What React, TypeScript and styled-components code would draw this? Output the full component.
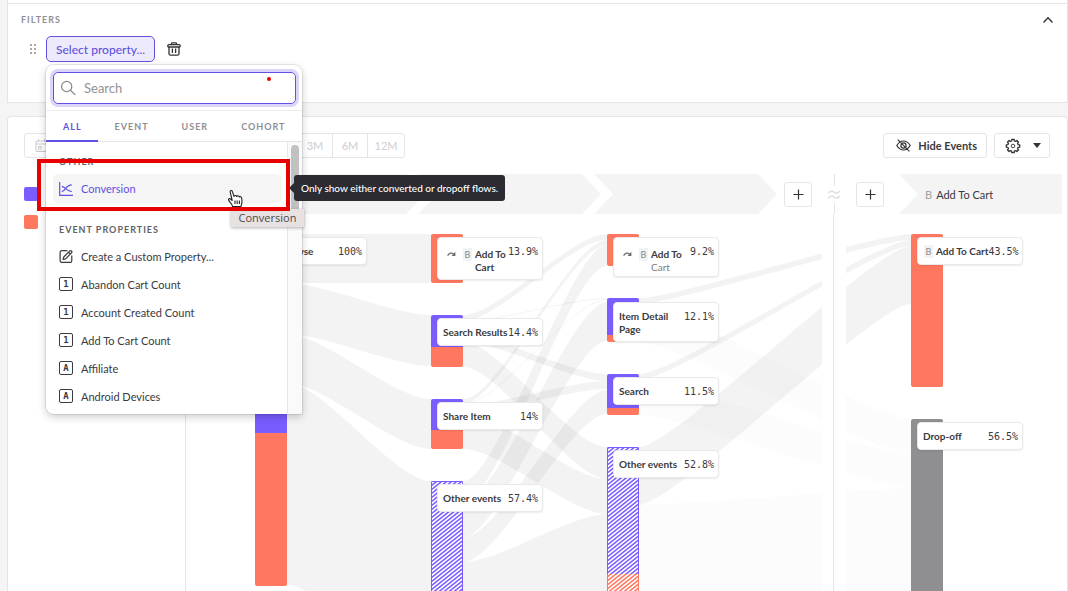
import React from "react";
import styled, { createGlobalStyle, css } from "styled-components";

const color = {
  accent: "#5f52e0",
  purple: "#7b5cff",
  coral: "#ff775e",
  grey: "#8f8f91",
  text: "#3a3a40",
  muted: "#8f8f93",
  faint: "#cdcdcf",
  line: "#e5e5e6",
};

const GlobalStyle = createGlobalStyle`
  * { box-sizing: border-box; }
  body {
    margin: 0;
    background: #f5f5f5;
    color: ${color.text};
    font-family: Lato, "Liberation Sans", sans-serif;
    font-size: 11px;
  }
  button, input { font: inherit; color: inherit; }
  button { cursor: pointer; }
`;

const Page = styled.main`
  position: relative;
  display: flex;
  flex-direction: column;
  gap: 13px;
  height: 100vh;
  padding-left: 7px;
  overflow: hidden;
`;

const QueryPanel = styled.section`
  border: 1px solid ${color.line};
  border-top: 0;
  background: #fff;
  padding-top: 3px;
`;

const FilterSection = styled.div`
  border-top: 1px solid ${color.line};
  padding: 9px 13px 40px;
`;

const SectionHeader = styled.header`
  display: flex;
  align-items: center;
  justify-content: space-between;
  height: 14px;
`;

const Caption = styled.h2<{ $dark?: boolean }>`
  margin: 0;
  font-size: 9px;
  line-height: 14px;
  font-weight: 700;
  letter-spacing: 1px;
  text-transform: uppercase;
  color: ${(p) => (p.$dark ? "#626266" : color.muted)};
`;

const IconButton = styled.button`
  display: flex;
  align-items: center;
  justify-content: center;
  padding: 0;
  border: 0;
  background: none;
`;

const FilterRow = styled.div`
  display: flex;
  align-items: center;
  gap: 9px;
  margin-top: 9px;
  padding-left: 9px;
`;

const PropertyPicker = styled.div`
  position: relative;
  margin-right: 3px;
`;

const PropertyButton = styled.button`
  display: block;
  height: 26px;
  padding: 0 9px;
  border: 1px solid ${color.accent};
  border-radius: 5px;
  background: #edebfb;
  color: ${color.accent};
  font-size: 12px;
  font-weight: 500;
`;

const Popover = styled.div`
  position: absolute;
  z-index: 5;
  top: 29px;
  left: 0;
  width: 256px;
  border-radius: 8px 8px 0 8px;
  background: #fff;
  box-shadow: 0 0 0 1px rgba(0, 0, 0, 0.08), 0 3px 8px rgba(0, 0, 0, 0.2);
`;

const SearchBox = styled.label`
  display: flex;
  align-items: center;
  gap: 8px;
  height: 32px;
  margin: 7px 6px 6px 7px;
  padding: 0 6px;
  border: 1px solid ${color.accent};
  border-radius: 5px;
  box-shadow: 0 0 0 3px #d9d6fa;
`;

const SearchInput = styled.input`
  flex: 1;
  min-width: 0;
  padding: 0;
  border: 0;
  outline: 0;
  background: none;
  font-size: 13px;
  &::placeholder { color: #929296; opacity: 1; }
`;

const Tabs = styled.div`
  display: flex;
  height: 32px;
  border-top: 1px solid #ededee;
  border-bottom: 1px solid ${color.line};
`;

const Tab = styled.button<{ $active?: boolean }>`
  height: 31px;
  padding: 2px 16px 0 17px;
  border: 0;
  border-bottom: 2px solid ${(p) => (p.$active ? color.accent : "transparent")};
  background: none;
  color: ${(p) => (p.$active ? color.accent : color.muted)};
  font-size: 9px;
  font-weight: 700;
  letter-spacing: 1px;
`;

const ListArea = styled.div`
  display: flex;
  height: 272px;
`;

const List = styled.div`
  flex: 1;
  padding: 12px 6px 0 7px;
`;

const GroupTitle = styled.div`
  padding: 1px 6px 5px;
`;

const Option = styled.button<{ $active?: boolean }>`
  display: flex;
  align-items: center;
  gap: 8px;
  width: 100%;
  height: 28px;
  padding: 0 6px;
  border: 0;
  border-radius: 5px;
  background: none;
  text-align: left;
  font-size: 11px;
  ${(p) =>
    p.$active &&
    css`
      height: 29px;
      margin-bottom: 19px;
      background: #f5f5f5;
      color: ${color.accent};
    `}
`;

const ScrollTrack = styled.div`
  width: 15px;
  padding: 3px;
  border-left: 1px solid #e8e8e8;
  background: #fafafa;
`;

const ScrollThumb = styled.div`
  height: 76px;
  border-radius: 4px;
  background: #c1c1c1;
`;

const ReportPanel = styled.section`
  flex: 1;
  display: flex;
  flex-direction: column;
  min-height: 0;
  border: 1px solid ${color.line};
  border-bottom: 0;
  border-radius: 4px 4px 0 0;
  background: #fff;
`;

const Toolbar = styled.div`
  display: flex;
  align-items: center;
  gap: 7px;
  padding: 16px 17px 16px 16px;
`;

const Ranges = styled.div`
  display: flex;
  height: 25px;
  margin-right: auto;
  border: 1px solid ${color.line};
  border-radius: 3px;
`;

const Range = styled.button<{ $width: number }>`
  display: flex;
  align-items: center;
  justify-content: ${(p) => (p.$width > 100 ? "flex-start" : "center")};
  width: ${(p) => p.$width}px;
  padding: 0 10px;
  border: 0;
  background: none;
  color: ${color.faint};
  font-size: 11px;
  & + & { border-left: 1px solid ${color.line}; }
`;

const ToolButton = styled.button`
  display: flex;
  align-items: center;
  gap: 7px;
  height: 25px;
  padding: 0 9px 0 12px;
  border: 1px solid ${color.line};
  border-radius: 3px;
  background: #fff;
  font-size: 11px;
  font-weight: 700;
`;

const SettingsButton = styled(ToolButton)`
  gap: 8px;
  padding: 0 8px 0 10px;
`;

const Report = styled.div`
  flex: 1;
  display: flex;
  min-height: 0;
  padding: 0 5px 0 16px;
`;

const Legend = styled.div`
  display: flex;
  flex-direction: column;
  gap: 14px;
  width: 161px;
  padding-top: 13px;
`;

const Swatch = styled.div<{ $color: string }>`
  width: 14px;
  height: 14px;
  border-radius: 2px;
  background: ${(p) => p.$color};
`;

const Flow = styled.div`
  flex: 1;
  min-width: 0;
  border-left: 1px solid ${color.line};
`;

const Steps = styled.div`
  display: flex;
  align-items: center;
  height: 40px;
  padding-left: 56px;
`;

const Step = styled.div<{ $last?: boolean }>`
  display: flex;
  align-items: center;
  gap: 4px;
  height: 40px;
  background: #f4f4f4;
  font-size: 11px;
  ${(p) =>
    p.$last
      ? css`
          flex: 1;
          margin-left: 15px;
          padding-left: 26px;
          clip-path: polygon(0 0, 100% 0, 100% 100%, 0 100%, 19px 50%);
        `
      : css`
          width: 183px;
          margin-right: -7px;
          clip-path: polygon(0 0, 164px 0, 100% 50%, 164px 100%, 0 100%, 19px 50%);
        `}
`;

const StepLetter = styled.span`
  color: #a0a0a3;
`;

const AddStep = styled.button<{ $first?: boolean }>`
  display: flex;
  align-items: center;
  justify-content: center;
  width: 28px;
  height: 25px;
  margin-left: ${(p) => (p.$first ? 14 : 0)}px;
  padding: 0;
  border: 1px solid ${color.line};
  border-radius: 3px;
  background: #fff;
`;

const Break = styled.div`
  display: flex;
  flex-direction: column;
  align-items: center;
  width: 44px;
  height: 40px;
`;

const BreakLine = styled.div`
  flex: 1;
  width: 1px;
  background: ${color.line};
`;

const Diagram = styled.div`
  position: relative;
  svg { display: block; }
`;

const Card = styled.div<{ $x: number; $y: number; $h: number }>`
  position: absolute;
  left: ${(p) => p.$x}px;
  top: ${(p) => p.$y}px;
  display: flex;
  justify-content: space-between;
  width: 106px;
  height: ${(p) => p.$h}px;
  padding: 7px 4px 0 5px;
  border: 1px solid #e9e9ea;
  border-radius: 4px;
  background: #fff;
  box-shadow: 0 1px 2px rgba(0, 0, 0, 0.08);
  font-size: 10px;
  line-height: 13px;
`;

const CardLabel = styled.div<{ $low?: boolean }>`
  display: flex;
  gap: 3px;
  padding-top: ${(p) => (p.$low ? 3 : 0)}px;
  font-weight: 700;
  white-space: nowrap;
  svg { margin: 0 3px 0 4px; }
`;

const Badge = styled.span`
  width: 9px;
  height: 13px;
  margin-left: 1px;
  background: #f3f3f3;
  color: #88888c;
  font-weight: 400;
  font-size: 9px;
  text-align: center;
`;

const Soft = styled.span`
  font-weight: 400;
  color: #7c7c80;
`;

const Percent = styled.span`
  font-family: "DejaVu Sans Mono", "Liberation Mono", monospace;
  font-size: 10px;
`;

const Hint = styled.div`
  position: absolute;
  z-index: 7;
  top: 175px;
  left: 294px;
  height: 26px;
  padding: 0 7px;
  border-radius: 3px;
  background: #2b2b31;
  color: #fff;
  font-size: 10px;
  line-height: 26px;
  font-weight: 500;
  &::before {
    content: "";
    position: absolute;
    left: -5px;
    top: 8px;
    border: solid transparent;
    border-width: 5px 5px 5px 0;
    border-right-color: #2b2b31;
  }
`;

const NativeTip = styled.div`
  position: absolute;
  z-index: 6;
  top: 209px;
  left: 231px;
  width: 73px;
  height: 18px;
  background: #e8e1e1;
  box-shadow: 0 1px 3px rgba(0, 0, 0, 0.3);
  color: #4c4848;
  font-family: "Open Sans", sans-serif;
  font-size: 11px;
  line-height: 18px;
  text-align: center;
`;

const Highlight = styled.div`
  position: absolute;
  z-index: 8;
  top: 159px;
  left: 37px;
  width: 253px;
  height: 52px;
  border: 4px solid #e60000;
`;

const Dot = styled.div`
  position: absolute;
  z-index: 8;
  top: 77px;
  left: 267px;
  width: 4px;
  height: 4px;
  border-radius: 2px;
  background: #e60000;
`;

const Cursor = styled.svg`
  position: absolute;
  z-index: 9;
  top: 189px;
  left: 227px;
`;

const DragHandle = () => (
  <svg width="7" height="10" viewBox="0 0 7 10" fill="#a8a8ab">
    {[0, 4, 8].map((y) => [0, 4].map((x) => <rect key={`${x}${y}`} x={x} y={y} width="2" height="2" />))}
  </svg>
);

const TrashIcon = () => (
  <svg width="14" height="14" viewBox="0 0 14 14" fill="none" stroke="#333338" strokeWidth="1.3">
    <rect x="0.8" y="2.6" width="12.4" height="2.4" rx="1.1" />
    <path d="M4.5 2.5V1.6Q4.5.8 5.3.8H8.7Q9.5.8 9.5 1.6V2.5M2 5V11.7Q2 13.2 3.5 13.2H10.5Q12 13.2 12 11.7V5M5.4 6.6V11M8.6 6.6V11" />
  </svg>
);

const SearchIcon = () => (
  <svg width="16" height="16" viewBox="0 0 16 16" fill="none" stroke="#88888c" strokeWidth="1.2" strokeLinecap="round">
    <circle cx="6.7" cy="6.5" r="5.1" />
    <path d="M10.4 10.2L15 14.6" />
  </svg>
);

const ConversionIcon = () => (
  <svg width="14" height="14" viewBox="0 0 14 14" fill="none" stroke="currentColor" strokeWidth="1.2">
    <path d="M.7 0V13.3H14M2.8 4.6C6.2 4 7.4 9.6 12.8 9.6M2.8 9.6C6.4 9.2 6.8 2.8 12.8 2.8" />
  </svg>
);

const EditIcon = () => (
  <svg width="14" height="15" viewBox="0 0 15 15" fill="none" stroke="currentColor" strokeWidth="1.3" strokeLinejoin="round">
    <path d="M9 1.3H3Q1.2 1.3 1.2 3V12Q1.2 13.8 3 13.8H12Q13.7 13.8 13.7 12V6.5" />
    <path d="M4.4 10.7L5.1 8 11.6 1.5Q12.4.8 13.2 1.6L13.5 1.9Q14.3 2.7 13.5 3.5L7.1 10Z M10.2 3L12.1 4.9" />
  </svg>
);

const TypeBox = styled.span`
  display: flex;
  align-items: center;
  justify-content: center;
  width: 14px;
  height: 14px;
  border: 1px solid ${color.text};
  border-radius: 2px;
  font-family: "DejaVu Sans Mono", monospace;
  font-size: 9px;
  line-height: 12px;
  font-weight: 700;
`;

const CalendarIcon = () => (
  <svg width="13" height="13" viewBox="0 0 13 13" fill="none" stroke={color.faint} strokeWidth="1.1">
    <rect x="1" y="2" width="11" height="10.4" rx="1" />
    <path d="M1 5H12M3.5 0V3M9.5 0V3M3.5 7.6H6V10H3.5Z" />
  </svg>
);

const EyeOffIcon = () => (
  <svg width="15" height="13" viewBox="0 0 15 13" fill="none" stroke="#333338" strokeWidth="1.2">
    <path d="M.8 6.5Q3.5 2 7.5 2T14.2 6.5Q11.5 11 7.5 11T.8 6.5ZM1.8.6L13.4 12.4" />
    <circle cx="7.5" cy="6.5" r="2.6" />
  </svg>
);

// Outline of an eight-toothed cog: each tooth is two outer points between two inner ones.
const cogOutline = Array.from({ length: 8 }, (_, i) =>
  ([[-14, 5.3], [-10, 6.8], [10, 6.8], [14, 5.3]] as const)
    .map(([offset, r]) => {
      const a = ((i * 45 + offset) * Math.PI) / 180;
      return `${(8 + r * Math.sin(a)).toFixed(2)} ${(8 - r * Math.cos(a)).toFixed(2)}`;
    })
    .join("L")
).join("L");

const GearIcon = () => (
  <svg width="16" height="16" viewBox="0 0 16 16" fill="none" stroke="#333338" strokeLinejoin="round">
    <circle cx="8" cy="8" r="1.8" strokeWidth="0.9" />
    <path d={`M${cogOutline}Z`} strokeWidth="1.3" />
  </svg>
);

const RedoIcon = () => (
  <svg width="9" height="13" viewBox="0 0 9 13" fill="none" stroke="#6b6b70" strokeWidth="1.3">
    <path d="M.6 7.6Q3 3.2 7 6.4" />
    <path d="M8.4 3.8V7.9H4.6Z" fill="#6b6b70" stroke="none" />
  </svg>
);

const PlusIcon = () => (
  <svg width="11" height="11" viewBox="0 0 11 11" stroke="#333338" strokeWidth="1.2">
    <path d="M5.5 .5V10.5M.5 5.5H10.5" />
  </svg>
);

const COLS = [69, 245, 421, 725];
const BAR = 32;
const BEND = 36;

type Segment = { y: number; h: number; fill: string };
const bars: { col: number; segments: Segment[] }[] = [
  { col: 0, segments: [{ y: 20, h: 199, fill: color.purple }, { y: 219, h: 153, fill: color.coral }] },
  { col: 1, segments: [{ y: 20, h: 49, fill: color.coral }] },
  { col: 1, segments: [{ y: 101, h: 32, fill: color.purple }, { y: 133, h: 20, fill: color.coral }] },
  { col: 1, segments: [{ y: 185, h: 31, fill: color.purple }, { y: 216, h: 19, fill: color.coral }] },
  { col: 1, segments: [{ y: 267, h: 202, fill: "url(#hatchPurple)" }] },
  { col: 2, segments: [{ y: 20, h: 32, fill: color.coral }] },
  { col: 2, segments: [{ y: 84, h: 37, fill: color.purple }, { y: 121, h: 7, fill: color.coral }] },
  { col: 2, segments: [{ y: 160, h: 34, fill: color.purple }, { y: 194, h: 7, fill: color.coral }] },
  { col: 2, segments: [{ y: 233, h: 127, fill: "url(#hatchPurple)" }, { y: 360, h: 60, fill: "url(#hatchCoral)" }] },
  { col: 3, segments: [{ y: 20, h: 153, fill: color.coral }] },
  { col: 3, segments: [{ y: 205, h: 200, fill: color.grey }] },
];

// from column, source top, source bottom, target top, target bottom
type Link = [number, number, number, number, number, boolean?];
const links: Link[] = [
  [0, 20, 69, 20, 69],
  [0, 69, 120, 101, 152],
  [0, 120, 169, 185, 235],
  [0, 169, 371, 267, 469],
  [1, 101, 107, 20, 26],
  [1, 107, 108, 84, 85],
  [1, 121, 128, 160, 167],
  [1, 128, 153, 233, 265],
  [1, 185, 190, 26, 31],
  [1, 190, 191, 85, 86],
  [1, 191, 199, 167, 175],
  [1, 199, 235, 265, 300],
  [1, 267, 288, 31, 52],
  [1, 288, 324, 88, 127],
  [1, 324, 348, 176, 200],
  [1, 348, 469, 300, 420],
  [2, 84, 90, 20, 26],
  [2, 160, 166, 26, 32],
  [2, 233, 291, 32, 90],
  [2, 90, 128, 205, 240, true],
  [2, 166, 201, 240, 274, true],
  [2, 291, 418, 274, 401, true],
];

const ribbon = ([col, a, b, c, d]: Link) => {
  const x0 = COLS[col] + BAR;
  const x1 = COLS[col + 1];
  const l = x0 + BEND;
  const r = x1 - BEND;
  return `M${x0} ${a}C${l} ${a} ${r} ${c} ${x1} ${c}V${d}C${r} ${d} ${l} ${b} ${x0} ${b}Z`;
};

const FlowDiagram = () => (
  <svg width="876" height="480" viewBox="0 0 876 480">
    <defs>
      {[["hatchPurple", color.purple], ["hatchCoral", color.coral]].map(([id, c]) => (
        <pattern key={id} id={id} width="5" height="4" patternUnits="userSpaceOnUse">
          <rect width="5" height="4" fill="#fff" />
          <path d="M-5 4L5 -4M-5 8L10 -4M0 8L10 0" stroke={c} strokeWidth="1.5" />
        </pattern>
      ))}
    </defs>
    {links.map((link, i) => (
      <path key={i} d={ribbon(link)} fill="#000" fillOpacity={link[5] ? 0.01 : 0.047} />
    ))}
    <rect x="636" width="24" height="480" fill="#fff" />
    <path d="M647.5 0V480" stroke={color.line} />
    {bars.map(({ col, segments }, i) => {
      const top = segments[0].y;
      const last = segments[segments.length - 1];
      const height = last.y + last.h - top;
      const hatched = last.fill.startsWith("url");
      return (
        <g key={i}>
          <clipPath id={`bar${i}`}>
            <rect x={COLS[col]} y={top} width={BAR} height={height} rx="2" />
          </clipPath>
          <g clipPath={`url(#bar${i})`}>
            {segments.map((s) => (
              <rect key={s.y} x={COLS[col]} y={s.y} width={BAR} height={s.h} fill={s.fill} />
            ))}
            {hatched &&
              segments.map((s) => (
                <path
                  key={s.y}
                  d={`M${COLS[col] + 0.5} ${s.y}V${s.y + s.h}M${COLS[col] + BAR - 0.5} ${s.y}V${s.y + s.h}`}
                  stroke={s.fill === "url(#hatchPurple)" ? color.purple : color.coral}
                />
              ))}
            {hatched && <path d={`M${COLS[col]} ${top + 0.5}h${BAR}`} stroke={color.purple} />}
          </g>
        </g>
      );
    })}
  </svg>
);

type NodeCard = {
  col: number;
  y: number;
  h?: number;
  label: React.ReactNode;
  percent: string;
  badge?: string;
  redo?: boolean;
};

const cards: NodeCard[] = [
  { col: 0, y: 23, label: "Browse", badge: "A", percent: "100%" },
  { col: 1, y: 23, h: 43, label: <>Add To<br />Cart</>, badge: "B", redo: true, percent: "13.9%" },
  { col: 1, y: 104, label: "Search Results", percent: "14.4%" },
  { col: 1, y: 188, label: "Share Item", percent: "14%" },
  { col: 1, y: 270, label: "Other events", percent: "57.4%" },
  { col: 2, y: 23, h: 40, label: <>Add To<br /><Soft>Cart</Soft></>, badge: "B", redo: true, percent: "9.2%" },
  { col: 2, y: 88, h: 40, label: <>Item Detail<br />Page</>, percent: "12.1%" },
  { col: 2, y: 163, label: "Search", percent: "11.5%" },
  { col: 2, y: 236, label: "Other events", percent: "52.8%" },
  { col: 3, y: 23, label: "Add To Cart", badge: "B", percent: "43.5%" },
  { col: 3, y: 208, label: "Drop-off", percent: "56.5%" },
];

const properties: [string, string][] = [
  ["1", "Abandon Cart Count"],
  ["1", "Account Created Count"],
  ["1", "Add To Cart Count"],
  ["A", "Affiliate"],
  ["A", "Android Devices"],
];

export default function App() {
  return (
    <Page>
      <GlobalStyle />
      <QueryPanel>
        <FilterSection>
          <SectionHeader>
            <Caption>Filters</Caption>
            <IconButton aria-label="Collapse filters">
              <svg width="12" height="8" viewBox="0 0 12 8" fill="none" stroke="#333338" strokeWidth="1.4">
                <path d="M1.5 6.5L6 1.8L10.5 6.5" />
              </svg>
            </IconButton>
          </SectionHeader>
          <FilterRow>
            <DragHandle />
            <PropertyPicker>
              <PropertyButton>Select property...</PropertyButton>
              <Popover>
                <SearchBox>
                  <SearchIcon />
                  <SearchInput placeholder="Search" aria-label="Search" />
                </SearchBox>
                <Tabs>
                  <Tab $active>ALL</Tab>
                  <Tab>EVENT</Tab>
                  <Tab>USER</Tab>
                  <Tab>COHORT</Tab>
                </Tabs>
                <ListArea>
                  <List>
                    <GroupTitle>
                      <Caption $dark>Other</Caption>
                    </GroupTitle>
                    <Option $active>
                      <ConversionIcon />
                      Conversion
                    </Option>
                    <GroupTitle>
                      <Caption $dark>Event Properties</Caption>
                    </GroupTitle>
                    <Option>
                      <EditIcon />
                      Create a Custom Property...
                    </Option>
                    {properties.map(([type, name]) => (
                      <Option key={name}>
                        <TypeBox>{type}</TypeBox>
                        {name}
                      </Option>
                    ))}
                  </List>
                  <ScrollTrack>
                    <ScrollThumb />
                  </ScrollTrack>
                </ListArea>
              </Popover>
            </PropertyPicker>
            <IconButton aria-label="Delete filter">
              <TrashIcon />
            </IconButton>
          </FilterRow>
        </FilterSection>
      </QueryPanel>

      <ReportPanel>
        <Toolbar>
          <Ranges>
            <Range $width={272} aria-label="Custom range">
              <CalendarIcon />
            </Range>
            <Range $width={35}>3M</Range>
            <Range $width={35}>6M</Range>
            <Range $width={37}>12M</Range>
          </Ranges>
          <ToolButton>
            <EyeOffIcon />
            Hide Events
          </ToolButton>
          <SettingsButton aria-label="Settings">
            <GearIcon />
            <svg width="12" height="5" viewBox="0 0 12 5" fill="#333338">
              <path d="M4 0H12L8 5Z" />
            </svg>
          </SettingsButton>
        </Toolbar>
        <Report>
          <Legend>
            <Swatch $color={color.purple} />
            <Swatch $color={color.coral} />
          </Legend>
          <Flow>
            <Steps>
              <Step />
              <Step />
              <Step />
              <AddStep $first aria-label="Add step">
                <PlusIcon />
              </AddStep>
              <Break>
                <BreakLine />
                <svg width="14" height="17" viewBox="0 0 14 17" fill="none" stroke="#dcdcde" strokeWidth="1.2">
                  <path d="M1 7.5Q4 3.5 7 6T13 5M1 12.5Q4 8.5 7 11T13 10" />
                </svg>
                <BreakLine />
              </Break>
              <AddStep aria-label="Add step">
                <PlusIcon />
              </AddStep>
              <Step $last>
                <StepLetter>B</StepLetter>
                Add To Cart
              </Step>
            </Steps>
            <Diagram>
              <FlowDiagram />
              {cards.map((c, i) => (
                <Card key={i} $x={COLS[c.col] + 6} $y={c.y} $h={c.h ?? 28}>
                  <CardLabel $low={c.redo}>
                    {c.redo && <RedoIcon />}
                    {c.badge && <Badge>{c.badge}</Badge>}
                    <span>{c.label}</span>
                  </CardLabel>
                  <Percent>{c.percent}</Percent>
                </Card>
              ))}
            </Diagram>
          </Flow>
        </Report>
      </ReportPanel>

      <NativeTip>Conversion</NativeTip>
      <Hint role="tooltip">Only show either converted or dropoff flows.</Hint>
      <Highlight />
      <Dot />
      <Cursor width="17" height="19" viewBox="0 0 17 19" fill="#fff" stroke="#222" strokeWidth="1.1" strokeLinejoin="round">
        <path d="M5.6 17.5C5 15 3.2 13.6 1.8 11.4C.9 10 2.3 9 3.5 10L5.2 11.5L3.2 3.2C2.8 1.4 4.8.9 5.4 2.6L7.1 7.5C7.3 6.2 9.2 6 9.7 7.5C10.2 6.4 11.9 6.6 12.2 8C13 7.2 14.5 7.6 14.7 9L15 12.5C15 14.5 14.2 15.8 14 17.5Z" />
        <path d="M8 11.5V15M10.2 11.5V15M12.4 11.5V15" />
      </Cursor>
    </Page>
  );
}
